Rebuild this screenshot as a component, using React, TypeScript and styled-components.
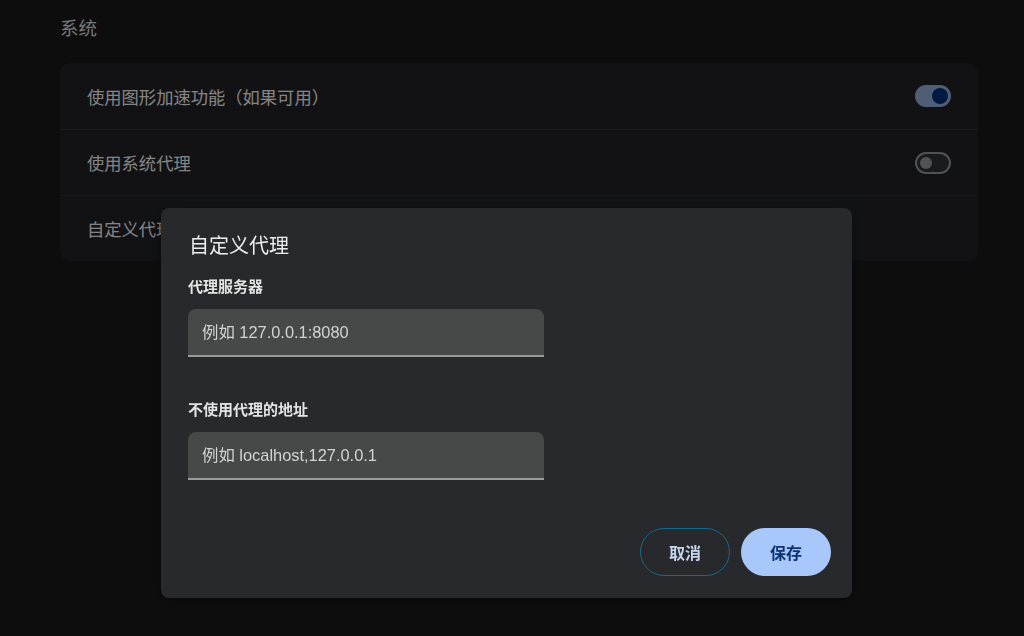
import React from "react";
import styled, { createGlobalStyle } from "styled-components";

const GlobalStyle = createGlobalStyle`
  html, body {
    margin: 0;
    padding: 0;
    background: #181819;
    font-family: "Liberation Sans", "Noto Sans CJK SC", "Noto Sans", sans-serif;
  }
  * { box-sizing: border-box; }
`;

const Page = styled.div`
  width: 1024px;
  height: 636px;
  padding: 17px 46px 0 60px;
  background: #181819;
  overflow: hidden;
`;

const SectionTitle = styled.h2`
  margin: 0 0 22px 0;
  font-size: 18.5px;
  line-height: 24px;
  font-weight: 400;
  color: #cfcfcf;
`;

const Card = styled.div`
  background: #1f2023;
  border-radius: 10px;
  display: flex;
  flex-direction: column;
`;

const Row = styled.div`
  height: 66px;
  padding: 0 27px;
  display: flex;
  align-items: center;
  justify-content: space-between;
  font-size: 17.3px;
  color: #e3e3e3;
  & + & {
    border-top: 1px solid #2c2d30;
  }
`;

const Track = styled.div<{ $on: boolean }>`
  width: 36px;
  height: 22px;
  border-radius: 11px;
  display: flex;
  align-items: center;
  padding: 0 3px;
  justify-content: ${(p) => (p.$on ? "flex-end" : "flex-start")};
  background: ${(p) => (p.$on ? "#8aa2ca" : "#2e2f32")};
  border: ${(p) => (p.$on ? "none" : "2px solid #8b8d90")};
`;

const Thumb = styled.div<{ $on: boolean }>`
  width: ${(p) => (p.$on ? "16px" : "12px")};
  height: ${(p) => (p.$on ? "16px" : "12px")};
  border-radius: 50%;
  background: ${(p) => (p.$on ? "#062e6f" : "#8b8d90")};
`;

const Scrim = styled.div`
  position: fixed;
  inset: 0;
  background: rgba(0, 0, 0, 0.42);
  padding: 208px 0 0 161px;
`;

const Dialog = styled.div`
  width: 691px;
  height: 390px;
  background: #28292c;
  border-radius: 8px;
  padding: 24px 21px 22px 28px;
  display: flex;
  flex-direction: column;
  box-shadow: 0 4px 16px rgba(0, 0, 0, 0.4);
`;

const DialogTitle = styled.h3`
  margin: 0 0 17px 0;
  font-size: 20px;
  line-height: 28px;
  font-weight: 400;
  color: #ececec;
`;

const Field = styled.div`
  display: flex;
  flex-direction: column;
  & + & {
    margin-top: 43px;
  }
`;

const Label = styled.label`
  font-size: 15px;
  line-height: 20px;
  font-weight: 700;
  color: #e3e3e3;
  margin-bottom: 12px;
  margin-left: -1px;
`;

const Input = styled.input`
  width: 356px;
  height: 48px;
  margin-left: -1px;
  border: none;
  border-bottom: 2px solid #9a9b9b;
  border-radius: 8px 8px 0 0;
  background: #474848;
  padding: 0 14px;
  font-family: "Liberation Sans", "Noto Sans CJK SC", "Noto Sans", sans-serif;
  font-size: 16.4px;
  color: #e3e3e3;
  outline: none;
  &::placeholder {
    color: #d2d3d3;
  }
`;

const Actions = styled.div`
  margin-top: auto;
  display: flex;
  justify-content: flex-end;
  gap: 11px;
`;

const Button = styled.button<{ $primary?: boolean }>`
  height: 48px;
  padding: ${(p) => (p.$primary ? "0 29px" : "0 28px")};
  border-radius: 24px;
  font-family: "Liberation Sans", "Noto Sans CJK SC", "Noto Sans", sans-serif;
  font-size: 16px;
  font-weight: 700;
  cursor: pointer;
  border: ${(p) => (p.$primary ? "none" : "1.5px solid #176a88")};
  background: ${(p) => (p.$primary ? "#a8c7fa" : "transparent")};
  color: ${(p) => (p.$primary ? "#0b3470" : "#c6d3ee")};
`;

export default function App() {
  return (
    <>
      <GlobalStyle />
      <Page>
        <SectionTitle>系统</SectionTitle>
        <Card>
          <Row>
            使用图形加速功能（如果可用）
            <Track $on>
              <Thumb $on />
            </Track>
          </Row>
          <Row>
            使用系统代理
            <Track $on={false}>
              <Thumb $on={false} />
            </Track>
          </Row>
          <Row>自定义代理</Row>
        </Card>
      </Page>
      <Scrim>
        <Dialog>
          <DialogTitle>自定义代理</DialogTitle>
          <Field>
            <Label>代理服务器</Label>
            <Input placeholder="例如 127.0.0.1:8080" />
          </Field>
          <Field>
            <Label>不使用代理的地址</Label>
            <Input placeholder="例如 localhost,127.0.0.1" />
          </Field>
          <Actions>
            <Button>取消</Button>
            <Button $primary>保存</Button>
          </Actions>
        </Dialog>
      </Scrim>
    </>
  );
}
